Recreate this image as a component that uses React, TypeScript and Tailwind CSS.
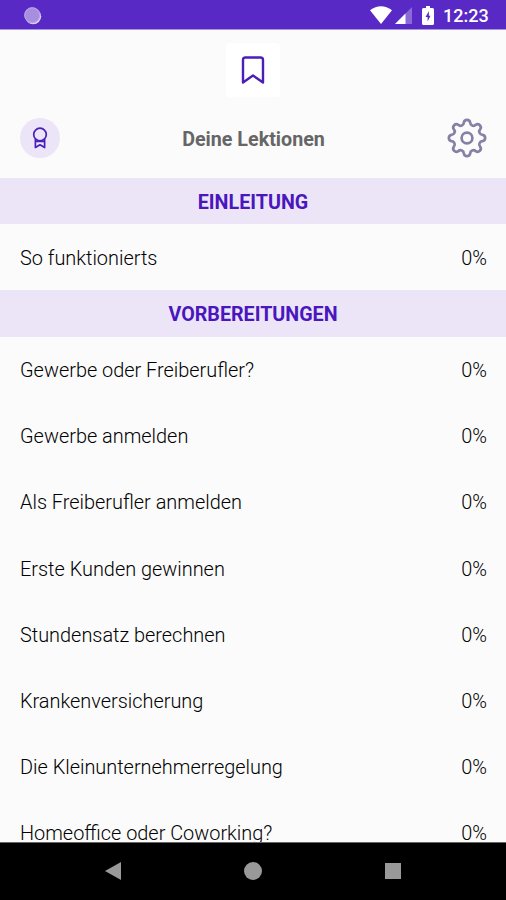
interface Lesson {
  title: string;
  progress: number;
}

interface Section {
  title: string;
  lessons: Lesson[];
}

const SECTIONS: Section[] = [
  {
    title: "EINLEITUNG",
    lessons: [{ title: "So funktionierts", progress: 0 }],
  },
  {
    title: "VORBEREITUNGEN",
    lessons: [
      { title: "Gewerbe oder Freiberufler?", progress: 0 },
      { title: "Gewerbe anmelden", progress: 0 },
      { title: "Als Freiberufler anmelden", progress: 0 },
      { title: "Erste Kunden gewinnen", progress: 0 },
      { title: "Stundensatz berechnen", progress: 0 },
      { title: "Krankenversicherung", progress: 0 },
      { title: "Die Kleinunternehmerregelung", progress: 0 },
      { title: "Homeoffice oder Coworking?", progress: 0 },
    ],
  },
];

// Eight round teeth, joined by round valleys
function gearPath() {
  const point = (deg: number) => {
    const rad = (deg * Math.PI) / 180;
    return `${(20 + 15.8 * Math.sin(rad)).toFixed(2)} ${(20 - 15.8 * Math.cos(rad)).toFixed(2)}`;
  };
  let d = `M${point(-11.5)}`;
  for (let i = 0; i < 8; i++) {
    d += `A3.2 3.2 0 0 1 ${point(i * 45 + 11.5)}`;
    d += `A3.3 3.3 0 0 0 ${point(i * 45 + 33.5)}`;
  }
  return d + "Z";
}

function StatusBar() {
  return (
    <div className="flex h-[30px] shrink-0 items-center justify-between border-b border-[#a996e0] bg-[#5929c5] pl-6 pr-[18px] text-white">
      <svg className="mt-0.5" width="18" height="18" viewBox="0 0 18 18">
        <circle cx="9.2" cy="9.3" r="8" fill="#ddd2f5" />
        <circle cx="8.2" cy="8.2" r="8" fill="#a78ee0" />
        <circle cx="8.2" cy="8.2" r="7.4" fill="none" stroke="#b9a5e8" />
      </svg>
      <div className="flex items-center pt-px">
        <svg width="22" height="18" viewBox="0 0 22 18" fill="currentColor">
          <path d="M0 4.2Q11-3.8 22 4.2L11 18Z" />
        </svg>
        <svg className="ml-[3px]" width="17" height="17" viewBox="0 0 17 17" fill="currentColor">
          <path d="M17 0V17H0Z" opacity="0.3" />
          <path d="M10.5 6.5V17H0Z" />
        </svg>
        <svg className="ml-[10px]" width="12" height="19" viewBox="0 0 12 19">
          <path d="M4 0H8V2H10.5Q12 2 12 3.5V17.5Q12 19 10.5 19H1.5Q0 19 0 17.5V3.5Q0 2 1.5 2H4Z" fill="currentColor" />
          <path d="M7 5L3.5 11H5.6V15.5L8.5 9.7H6.8Z" fill="#5929c5" />
        </svg>
        <span className="ml-[9px] w-[45px] whitespace-nowrap pt-0.5 text-[18px] font-medium leading-none">12:23</span>
      </div>
    </div>
  );
}

function Header() {
  return (
    <header className="shrink-0">
      <div className="flex h-[69px] justify-center pt-[13px]">
        <div className="flex h-[54px] w-[54px] items-center justify-center rounded bg-white">
          <svg width="24" height="30" viewBox="0 0 24 30" fill="none" stroke="#4a1fb8" strokeWidth="2.4" strokeLinejoin="round">
            <path d="M2 27.5V5Q2 2.5 4.5 2.5H19.5Q22 2.5 22 5V27.5L12 20.5Z" />
          </svg>
        </div>
      </div>
      <div className="grid h-[79px] grid-cols-[40px_1fr_40px] items-center pl-5 pr-[19px]">
        <div className="-mt-0.5 flex h-10 w-10 items-center justify-center rounded-full bg-[#ece5f8]">
          <svg width="16" height="22" viewBox="0 0 16 22" fill="none" stroke="#4a1fb8" strokeWidth="1.7" strokeLinejoin="round">
            <circle cx="8" cy="7.5" r="6.3" />
            <path d="M3.4 12V20.5L8 17.8L12.6 20.5V12M3.4 14.3H12.6" />
          </svg>
        </div>
        <h1 className="pt-0.5 text-center text-[19.7px] font-bold text-[#666666]">Deine Lektionen</h1>
        <svg className="-mt-0.5" width="40" height="40" viewBox="0 0 40 40" fill="none" stroke="#8580a5" strokeWidth="2.7">
          <path d={gearPath()} />
          <circle cx="20" cy="20" r="5.4" />
        </svg>
      </div>
    </header>
  );
}

function LessonRow({ lesson }: { lesson: Lesson }) {
  return (
    <li className="flex h-[66.1px] items-center justify-between pl-5 pr-[19px] pt-[3px] text-[19.9px] font-light text-black">
      <span>{lesson.title}</span>
      <span>{lesson.progress}%</span>
    </li>
  );
}

function NavigationBar() {
  return (
    <nav className="grid h-[58px] shrink-0 grid-cols-[226px_54px_226px] items-center justify-items-center border-t border-[#666] bg-black pb-0.5">
      <svg width="16" height="18" viewBox="0 0 16 18" fill="#999999">
        <path d="M16 0V18L0 9Z" />
      </svg>
      <div className="h-[18px] w-[18px] rounded-full bg-[#999999]" />
      <div className="h-4 w-4 bg-[#999999]" />
    </nav>
  );
}

export default function App() {
  return (
    <div className="flex h-[900px] w-[506px] flex-col overflow-hidden bg-[#fbfbfb] font-['Roboto',sans-serif]">
      <StatusBar />
      <Header />
      <main className="min-h-0 flex-1 overflow-hidden">
        {SECTIONS.map((section) => (
          <section key={section.title}>
            <h2 className="flex h-[46.3px] items-center justify-center bg-[#ece5f7] pt-[3px] text-[19.7px] font-bold text-[#4a16bd]">
              {section.title}
            </h2>
            <ul>
              {section.lessons.map((lesson) => (
                <LessonRow key={lesson.title} lesson={lesson} />
              ))}
            </ul>
          </section>
        ))}
      </main>
      <NavigationBar />
    </div>
  );
}
